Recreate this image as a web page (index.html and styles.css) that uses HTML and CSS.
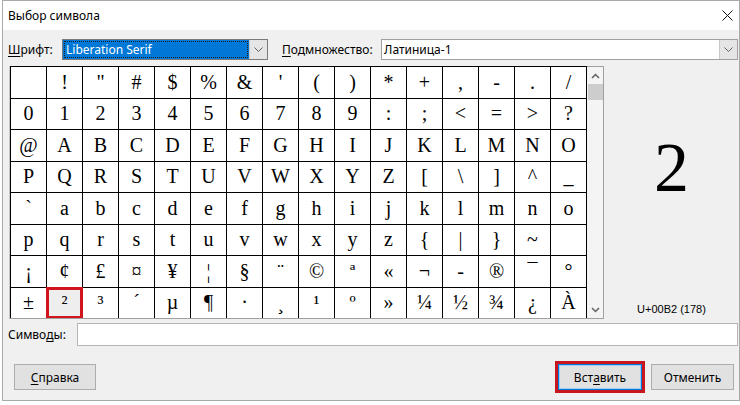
FILE: index.html
```html
<!DOCTYPE html>
<html lang="ru">
<head>
    <meta charset="UTF-8">
    <meta name="viewport" content="width=device-width, initial-scale=1.0">
    <title>Выбор символа</title>
    <link rel="stylesheet" href="styles.css">
</head>
<body>

    <div class="window">

        <!-- Title bar -->
        <div class="titlebar">
            <span class="title">Выбор символа</span>
            <svg class="close" width="11" height="11" viewBox="0 0 11 11">
                <path d="M0.5 0.5 L10.5 10.5 M10.5 0.5 L0.5 10.5" stroke="#111" stroke-width="1" fill="none"/>
            </svg>
        </div>

        <div class="content">

            <!-- Font / subset -->
            <div class="font-row">
                <label class="lbl lbl-font"><u>Ш</u>рифт:</label>
                <div class="combo combo-font">
                    <span class="combo-text">Liberation Serif</span>
                    <span class="combo-btn">
                        <svg width="9" height="6" viewBox="0 0 9 6"><path d="M0.5 0.5 L4.5 4.5 L8.5 0.5" stroke="#606060" fill="none"/></svg>
                    </span>
                </div>
                <label class="lbl lbl-subset"><u>П</u>одмножество:</label>
                <div class="combo combo-subset">
                    <span class="combo-text">Латиница-1</span>
                    <span class="combo-btn">
                        <svg width="9" height="6" viewBox="0 0 9 6"><path d="M0.5 0.5 L4.5 4.5 L8.5 0.5" stroke="#606060" fill="none"/></svg>
                    </span>
                </div>
            </div>

            <!-- Character map + preview -->
            <div class="main">
                <div class="charmap">
                    <div class="grid" id="grid"></div>
                    <div class="scrollbar">
                        <svg class="arrow" width="9" height="6" viewBox="0 0 9 6"><path d="M1 5 L4.5 1.5 L8 5" stroke="#606060" stroke-width="1.5" fill="none"/></svg>
                        <div class="thumb"></div>
                        <div class="track"></div>
                        <svg class="arrow" width="9" height="6" viewBox="0 0 9 6"><path d="M1 1 L4.5 4.5 L8 1" stroke="#606060" stroke-width="1.5" fill="none"/></svg>
                    </div>
                </div>
                <div class="preview">
                    <div class="preview-char">2</div>
                    <div class="preview-code">U+00B2 (178)</div>
                </div>
            </div>

            <!-- Symbols -->
            <div class="symbols-row">
                <label class="lbl lbl-symbols">Симво<u>д</u>ы:</label>
                <div class="input"></div>
            </div>

            <!-- Buttons -->
            <div class="buttons">
                <button class="btn btn-help"><u>С</u>правка</button>
                <div class="spacer"></div>
                <button class="btn btn-insert">Вст<u>а</u>вить</button>
                <button class="btn btn-cancel">Отменить</button>
            </div>

        </div>
    </div>

    <script>
        // Latin-1 rows as shown by the dialog (0x7F-0x9F skipped)
        const codes = [];
        for (let c = 0x20; c <= 0x7E; c++) codes.push(c);
        for (let c = 0xA0; c <= 0xC0; c++) codes.push(c);

        const grid = document.getElementById('grid');
        codes.forEach(code => {
            const cell = document.createElement('div');
            cell.className = 'cell';
            let ch = String.fromCharCode(code);
            if (code === 0x20 || code === 0xA0) ch = '';
            if (code === 0xAD) ch = '-'; // soft hyphen is drawn as a dash
            cell.textContent = ch;
            if (code === 0xB2) cell.classList.add('selected');
            grid.appendChild(cell);
        });
    </script>

</body>
</html>
```

FILE: styles.css
```css
body {
    margin: 0;
    background-color: #ffffff;
    font-family: "Noto Sans", "Liberation Sans", sans-serif;
    font-size: 12px;
    color: #000000;
}
.window {
    margin-left: 2px;
    width: 738px;
    height: 401px;
    box-sizing: border-box;
    border: 1px solid #a9a9a9;
    background-color: #f0f0f0;
    display: flex;
    flex-direction: column;
}
.titlebar {
    height: 29px;
    background-color: #ffffff;
    display: flex;
    align-items: center;
    padding: 0 6px 0 5px;
}
.title {
    flex: 1;
    font-size: 12px;
}
.close {
    margin-right: 0;
}
.content {
    flex: 1;
    display: flex;
    flex-direction: column;
}
.lbl {
    display: flex;
    align-items: center;
    padding-left: 5px;
    white-space: nowrap;
}
.lbl u {
    text-decoration-thickness: 1px;
    text-underline-offset: 2px;
}

/* Font row */
.font-row {
    margin-top: 9px;
    height: 21px;
    display: flex;
}
.lbl-font {
    width: 54px;
}
.lbl-subset {
    width: 99px;
    margin-left: 14px;
    padding-left: 0;
}
.combo {
    display: flex;
    box-sizing: border-box;
    border: 1px solid #7a7a7a;
    background-color: #ffffff;
}
.combo-font {
    width: 206px;
    background-color: #0078d7;
}
.combo-font .combo-text {
    color: #ffffff;
    border: 1px dotted #202020;
    margin: 1px;
    padding-left: 1px;
}
.combo-subset {
    flex: 1;
    margin-right: 1px;
    border-color: #a0a0a0;
}
.combo-text {
    flex: 1;
    display: flex;
    align-items: center;
    padding-left: 2px;
}
.combo-btn {
    width: 17px;
    background-color: #e5e5e5;
    border-left: 1px solid #c9c9c9;
    display: flex;
    align-items: center;
    justify-content: center;
}

/* Character map */
.main {
    margin-top: 6px;
    height: 253px;
    display: flex;
}
.charmap {
    margin-left: 6px;
    display: flex;
    border-bottom: 1px solid #a0a0a0;
    border-left: 1px solid #c8c8c8;
}
.grid {
    width: 577px;
    height: 252px;
    box-sizing: border-box;
    padding: 1px 1px 0 1px;
    background-color: #000000;
    display: grid;
    grid-template-columns: repeat(16, 35px);
    grid-template-rows: repeat(8, 1fr);
    gap: 1px;
    overflow: hidden;
}
.cell {
    background-color: #ffffff;
    display: flex;
    align-items: center;
    justify-content: center;
    font-family: "Liberation Serif", serif;
    font-size: 20px;
}
.cell.selected {
    background-color: #eeeeee;
    outline: 3px solid #d2141c;
    outline-offset: -2px;
}
.scrollbar {
    width: 17px;
    box-sizing: border-box;
    border-top: 1px solid #a0a0a0;
    border-right: 1px solid #a0a0a0;
    background-color: #f4f4f4;
    display: flex;
    flex-direction: column;
    align-items: center;
}
.arrow {
    margin: 6px 0 5px;
}
.thumb {
    width: 15px;
    height: 16px;
    background-color: #cdcdcd;
}
.track {
    flex: 1;
}

/* Preview */
.preview {
    flex: 1;
    display: flex;
    flex-direction: column;
    align-items: center;
}
.preview-char {
    margin-top: 67px;
    font-family: "Liberation Serif", serif;
    font-size: 70px;
    line-height: 70px;
    flex: 1;
}
.preview-code {
    font-family: "Liberation Sans", sans-serif;
    font-size: 11px;
    margin-bottom: 4px;
}

/* Symbols row */
.symbols-row {
    margin-top: 4px;
    height: 23px;
    display: flex;
}
.lbl-symbols {
    width: 69px;
}
.input {
    flex: 1;
    margin-right: 1px;
    background-color: #ffffff;
    border: 1px solid #b4b4b4;
}

/* Buttons */
.buttons {
    margin-top: 18px;
    display: flex;
    align-items: center;
    padding: 0 5px 0 11px;
}
.spacer {
    flex: 1;
}
.btn {
    height: 26px;
    font-family: "Noto Sans", "Liberation Sans", sans-serif;
    font-size: 12px;
    background-color: #e1e1e1;
    border: 1px solid #adadad;
    padding: 0;
    color: #000000;
}
.btn u {
    text-underline-offset: 2px;
}
.btn-help {
    width: 82px;
}
.btn-insert {
    width: 84px;
    border: 1px solid #0078d7;
    box-shadow: inset 0 0 0 1px #9ccff5;
    outline: 3px solid #c8161e;
    margin-right: 9px;
}
.btn-cancel {
    width: 83px;
}
```
